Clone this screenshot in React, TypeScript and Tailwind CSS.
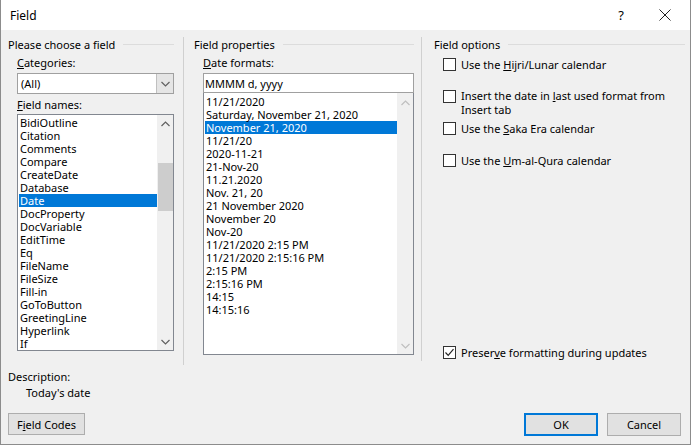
import React from 'react';

const fieldNames = [
    'BidiOutline', 'Citation', 'Comments', 'Compare', 'CreateDate', 'Database', 'Date',
    'DocProperty', 'DocVariable', 'EditTime', 'Eq', 'FileName', 'FileSize', 'Fill-in',
    'GoToButton', 'GreetingLine', 'Hyperlink', 'If',
];

const dateFormats = [
    '11/21/2020', 'Saturday, November 21, 2020', 'November 21, 2020', '11/21/20', '2020-11-21',
    '21-Nov-20', '11.21.2020', 'Nov. 21, 20', '21 November 2020', 'November 20', 'Nov-20',
    '11/21/2020 2:15 PM', '11/21/2020 2:15:16 PM', '2:15 PM', '2:15:16 PM', '14:15', '14:15:16',
];

const Chevron = ({ up, light }: { up?: boolean; light?: boolean }) => (
    <svg width="9" height="6" viewBox="0 0 9 6" className="block">
        <path
            d={up ? 'M0.5 5 L4.5 1 L8.5 5' : 'M0.5 1 L4.5 5 L8.5 1'}
            fill="none"
            stroke={light ? '#bfbfbf' : '#606060'}
            strokeWidth="1.2"
        />
    </svg>
);

const GroupHeader = ({ title }: { title: string }) => (
    <div className="flex items-center h-[15px]">
        <span className="whitespace-nowrap">{title}</span>
        <div className="flex-1 h-px bg-[#dcdcdc] ml-[8px]" />
    </div>
);

const CheckBox = ({ checked }: { checked?: boolean }) => (
    <div className="w-[13px] h-[13px] border border-[#333] bg-white shrink-0 flex items-center justify-center">
        {checked && (
            <svg width="11" height="11" viewBox="0 0 11 11">
                <path d="M1.5 5.5 L4.2 8.3 L9.5 2.2" fill="none" stroke="#222" strokeWidth="1.2" />
            </svg>
        )}
    </div>
);

export default function App() {
    return (
        <div className="w-[691px] h-[445px] bg-[#f0f0f0] border-r border-b border-l border-[#8c8c8c] flex flex-col text-[11px] leading-[13px] text-black font-['Noto_Sans',sans-serif] overflow-hidden">
            {/* Title bar */}
            <div className="h-[30px] bg-white flex items-center shrink-0">
                <span className="ml-[9px] text-[12px]">Field</span>
                <div className="flex-1" />
                <span className="text-[13px] mr-[35px]">?</span>
                <svg width="12" height="12" viewBox="0 0 12 12" className="mr-[19px]">
                    <path d="M0.5 0.5 L11.5 11.5 M11.5 0.5 L0.5 11.5" stroke="#222" strokeWidth="1" />
                </svg>
            </div>

            <div className="flex pt-[7px]">
                {/* Column 1 */}
                <div className="ml-[7px] w-[166px] flex flex-col">
                    <GroupHeader title="Please choose a field" />
                    <div className="ml-[9px] mt-[4px] h-[13px]"><u>C</u>ategories:</div>
                    <div className="ml-[9px] mt-[4px] h-[21px] bg-white border border-[#a0a0a0] flex items-center">
                        <span className="ml-[3px] flex-1">(All)</span>
                        <div className="w-[17px] h-full bg-[#e5e5e5] border-l border-[#c0c0c0] flex items-center justify-center">
                            <Chevron />
                        </div>
                    </div>
                    <div className="ml-[9px] mt-[4px] h-[13px]"><u>F</u>ield names:</div>
                    <div className="ml-[9px] mt-[3px] h-[237px] bg-white border border-[#828790] flex">
                        <div className="flex-1 pt-[1px] pl-[1px] overflow-hidden">
                            {fieldNames.map((n) => (
                                <div
                                    key={n}
                                    className={`h-[13px] pl-[1px] whitespace-nowrap ${n === 'Date' ? 'bg-[#0078d7] text-white' : ''}`}
                                >
                                    {n}
                                </div>
                            ))}
                        </div>
                        <div className="w-[16px] bg-[#f0f0f0] flex flex-col items-center">
                            <div className="h-[17px] flex items-center"><Chevron up /></div>
                            <div className="mt-[31px] w-[15px] h-[48px] bg-[#cdcdcd]" />
                            <div className="flex-1" />
                            <div className="h-[17px] flex items-center"><Chevron /></div>
                        </div>
                    </div>
                </div>

                <div className="ml-[9px] w-px h-[328px] bg-[#d0d0d0]" />

                {/* Column 2 */}
                <div className="ml-[10px] w-[220px] flex flex-col">
                    <GroupHeader title="Field properties" />
                    <div className="ml-[9px] mt-[4px] h-[13px]"><u>D</u>ate formats:</div>
                    <div className="ml-[9px] mt-[4px] h-[20px] bg-white border border-[#a0a0a0] flex items-center">
                        <span className="ml-[1px]">MMMM d, yyyy</span>
                    </div>
                    <div className="ml-[9px] h-[262px] bg-white border border-[#828790] border-t-0 flex">
                        <div className="flex-1 pt-[2px] pl-[1px] overflow-hidden">
                            {dateFormats.map((f) => (
                                <div
                                    key={f}
                                    className={`h-[13px] pl-[1px] whitespace-nowrap ${f === 'November 21, 2020' ? 'bg-[#0078d7] text-white' : ''}`}
                                >
                                    {f}
                                </div>
                            ))}
                        </div>
                        <div className="w-[16px] bg-[#f0f0f0] flex flex-col items-center">
                            <div className="h-[17px] mt-[1px] flex items-center"><Chevron up light /></div>
                            <div className="flex-1" />
                            <div className="h-[17px] flex items-center"><Chevron light /></div>
                        </div>
                    </div>
                </div>

                <div className="ml-[7px] w-px h-[324px] bg-[#d0d0d0]" />

                {/* Column 3 */}
                <div className="ml-[12px] w-[251px] flex flex-col">
                    <GroupHeader title="Field options" />
                    <div className="ml-[9px] mt-[6px] flex items-start gap-[5px]">
                        <CheckBox />
                        <span>Use the <u>H</u>ijri/Lunar calendar</span>
                    </div>
                    <div className="ml-[9px] mt-[19px] flex items-start gap-[5px]">
                        <CheckBox />
                        <span className="leading-[14px] -mt-[1px]">Insert the date in <u>l</u>ast used format from<br />Insert tab</span>
                    </div>
                    <div className="ml-[9px] mt-[5px] flex items-start gap-[5px]">
                        <CheckBox />
                        <span>Use the <u>S</u>aka Era calendar</span>
                    </div>
                    <div className="ml-[9px] mt-[19px] flex items-start gap-[5px]">
                        <CheckBox />
                        <span>Use the <u>U</u>m-al-Qura calendar</span>
                    </div>
                    <div className="flex-1" />
                    <div className="ml-[9px] mb-[6px] flex items-start gap-[5px]">
                        <CheckBox checked />
                        <span>Preser<u>v</u>e formatting during updates</span>
                    </div>
                </div>
            </div>

            {/* Description */}
            <div className="ml-[7px] mt-[5px] flex flex-col">
                <span className="h-[16px]">Description:</span>
                <span className="ml-[18px] h-[13px]">Today's date</span>
            </div>

            {/* Buttons */}
            <div className="flex mt-[14px] items-start">
                <button className="ml-[7px] w-[77px] h-[22px] bg-[#e1e1e1] border border-[#adadad] flex items-center justify-center">
                    F<u>i</u>eld Codes
                </button>
                <div className="flex-1" />
                <button className="w-[74px] h-[23px] bg-[#e1e1e1] border-2 border-[#0078d7] flex items-center justify-center">
                    OK
                </button>
                <button className="ml-[9px] mr-[9px] w-[74px] h-[23px] bg-[#e1e1e1] border border-[#adadad] flex items-center justify-center">
                    Cancel
                </button>
            </div>
        </div>
    );
}
